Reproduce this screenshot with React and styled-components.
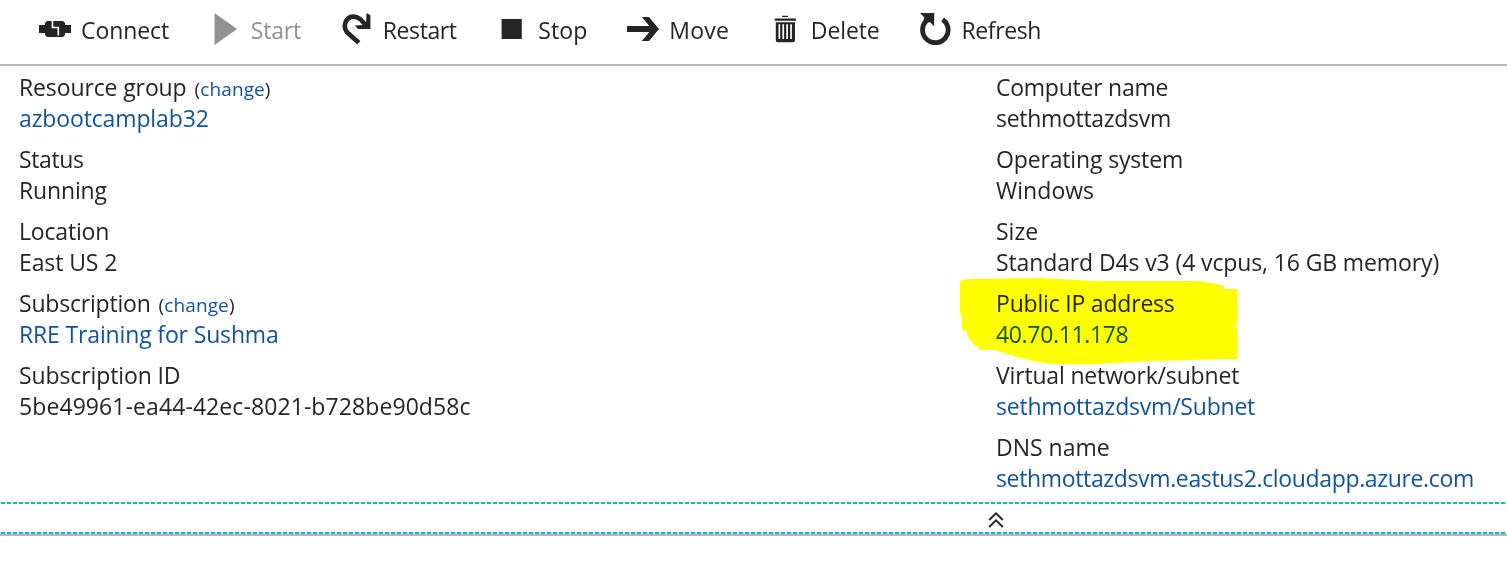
import React from "react";
import styled, { createGlobalStyle } from "styled-components";

const GlobalStyle = createGlobalStyle`
  body {
    margin: 0;
    background: #fff;
    color: #252525;
    font-family: "Open Sans", "Noto Sans", sans-serif;
    font-size: 23px;
    line-height: 31px;
  }
`;

const Page = styled.main`
  width: 1507px;
  height: 562px;
  overflow: hidden;
`;

const Toolbar = styled.nav`
  display: flex;
  gap: 39.8px;
  height: 51px;
  padding: 13px 0 0 39px;
  border-bottom: 2px solid #b9b9b9;
`;

const Command = styled.div`
  display: flex;
  gap: 10px;
  height: 32px;
  color: ${(p) => (p.$disabled ? "#919191" : "#252525")};
`;

const CommandIcon = styled.svg`
  flex: none;
  width: 32px;
  height: 32px;
  fill: currentColor;
`;

const Text = styled.span`
  white-space: nowrap;
  letter-spacing: ${(p) => p.$track || 0}px;
`;

const CommandLabel = styled(Text)`
  padding-top: 2px;
`;

const Essentials = styled.section`
  display: grid;
  grid-template-columns: 977px 1fr;
  height: 430px;
  padding: 6px 0 0 19px;
`;

const Column = styled.div`
  display: flex;
  flex-direction: column;
  gap: 10px;
`;

const Field = styled.div`
  position: relative;
  display: flex;
  flex-direction: column;
  height: 62px;
`;

const FieldLabel = styled.div`
  display: flex;
  align-items: baseline;
  gap: 8px;
  height: 31px;
`;

const FieldValue = styled.div`
  height: 31px;
`;

const Link = styled(Text)`
  color: #0f539f;
`;

const ChangeNote = styled(Text)`
  font-size: 19px;
`;

const Marker = styled.svg`
  position: absolute;
  left: -36px;
  top: -10px;
  width: 278px;
  height: 88px;
  fill: #ffff00;
  mix-blend-mode: multiply;
  pointer-events: none;
`;

const CollapseBar = styled.footer`
  display: flex;
  flex-direction: column;
  border-bottom: 2px solid #b4b9bd;
`;

const Dashes = styled.div`
  height: 2px;
  background: repeating-linear-gradient(
    90deg,
    #d5f7fa 0 1px,
    #27abc1 1px 5px,
    #d5f7fa 5px 6px
  );
`;

const CollapseButton = styled.div`
  display: flex;
  height: 28px;
  padding: 0 0 0 988px;
`;

const icons = {
  connect: (
    <>
      <path d="M0 12H6V10L8 8H24L26 10V12H32V20H26V22L24 24H8L6 22V20H0Z" />
      <path d="M13.5 7.5V14.5H19.3V22.5" fill="none" stroke="#fff" strokeWidth="1.6" />
    </>
  ),
  start: <path d="M5.5 0L28 16L5.5 32Z" />,
  restart: (
    <>
      <path
        d="M17.8 29.8L6.6 19.8C1 14 4.6 3.8 12.2 3.6C17.5 3.4 20.2 6.8 25 12.5"
        fill="none"
        stroke="currentColor"
        strokeWidth="4.6"
      />
      <path d="M25.5 0L29.4 2.2V16H17L13.8 12.6L22 12L25.2 9Z" />
    </>
  ),
  stop: <path d="M5.6 6H25.8V26H5.6Z" />,
  move: <path d="M14.8 4H22L32 16L22 28H14.8L22.3 19H0V13H22.3Z" />,
  trash: (
    <path
      fillRule="evenodd"
      d="M13 2.8H19V4H13ZM5.8 5.4H27V7.8H5.8ZM6.8 9.3H26V27.2Q26 29.3 24 29.3H8.8Q6.8 29.3 6.8 27.2ZM9.5 11.3V26H11.2V11.3ZM13.4 11.3V26H15.1V11.3ZM17.3 11.3V26H19V11.3ZM21.2 11.3V26H22.9V11.3Z"
    />
  ),
  refresh: (
    <>
      <path
        d="M23.6 6.4A12.8 12.8 0 1 1 7 8.2"
        fill="none"
        stroke="currentColor"
        strokeWidth="4.8"
      />
      <path d="M1 0H15.2V13.2L10.8 9L7 10.5L4.5 7.5L5.4 4.4Z" />
    </>
  ),
};

const commands = [
  { icon: "connect", label: "Connect", track: -0.09 },
  { icon: "start", label: "Start", track: -0.2 },
  { icon: "restart", label: "Restart", track: -0.42 },
  { icon: "stop", label: "Stop", track: 0.1 },
  { icon: "move", label: "Move", track: 0.2 },
  { icon: "trash", label: "Delete", track: -0.1 },
  { icon: "refresh", label: "Refresh", track: -0.38 },
].map((c) => ({ ...c, disabled: c.icon === "start" }));

const machine = [
  { label: "Resource group", lt: -0.12, change: true, value: "azbootcamplab32", vt: -0.13, link: true },
  { label: "Status", lt: -0.4, value: "Running", vt: -0.15 },
  { label: "Location", lt: -0.17, value: "East US 2", vt: -0.11 },
  { label: "Subscription", lt: -0.2, change: true, value: "RRE Training for Sushma", vt: -0.15, link: true },
  { label: "Subscription ID", lt: -0.11, value: "5be49961-ea44-42ec-8021-b728be90d58c", vt: 0.085 },
];

const network = [
  { label: "Computer name", lt: -0.25, value: "sethmottazdsvm", vt: -0.3 },
  { label: "Operating system", lt: -0.15, value: "Windows", vt: 0.04 },
  { label: "Size", lt: 0, value: "Standard D4s v3 (4 vcpus, 16 GB memory)", vt: -0.12 },
  { label: "Public IP address", lt: -0.2, value: "40.70.11.178", vt: -0.34, link: true, marked: true },
  { label: "Virtual network/subnet", lt: -0.17, value: "sethmottazdsvm/Subnet", vt: -0.21, link: true },
  { label: "DNS name", lt: 0, value: "sethmottazdsvm.eastus2.cloudapp.azure.com", vt: -0.35, link: true },
];

function Fields({ items }) {
  return (
    <Column>
      {items.map((f) => {
        const Value = f.link ? Link : Text;
        return (
          <Field key={f.label}>
            <FieldLabel>
              <Text $track={f.lt}>{f.label}</Text>
              {f.change && (
                <ChangeNote $track={0.1}>
                  (<Link $track={0.1}>change</Link>)
                </ChangeNote>
              )}
            </FieldLabel>
            <FieldValue>
              <Value $track={f.vt}>{f.value}</Value>
            </FieldValue>
            {f.marked && (
              <Marker viewBox="0 0 278 88">
                <path d="M0 3Q4 1 12 1L80 0L135 3H235Q251 4 264 8V11H277V45L275 47L277 50V81H264L190 83L130 86.5L90 86Q70 83 50 77L35 72H19V70Q8 64 6 52H2V41L0 34Z" />
              </Marker>
            )}
          </Field>
        );
      })}
    </Column>
  );
}

export default function App() {
  return (
    <Page>
      <GlobalStyle />
      <Toolbar>
        {commands.map((c) => (
          <Command key={c.label} $disabled={c.disabled}>
            <CommandIcon viewBox="0 0 32 32">{icons[c.icon]}</CommandIcon>
            <CommandLabel $track={c.track}>{c.label}</CommandLabel>
          </Command>
        ))}
      </Toolbar>
      <Essentials>
        <Fields items={machine} />
        <Fields items={network} />
      </Essentials>
      <CollapseBar>
        <Dashes />
        <CollapseButton>
          <svg width="16" height="28" viewBox="0 0 16 28" fill="none" stroke="#252525" strokeWidth="2">
            <path d="M1.2 16L8 9.4L14.8 16M1.2 23L8 16.4L14.8 23" />
          </svg>
        </CollapseButton>
        <Dashes />
      </CollapseBar>
    </Page>
  );
}
